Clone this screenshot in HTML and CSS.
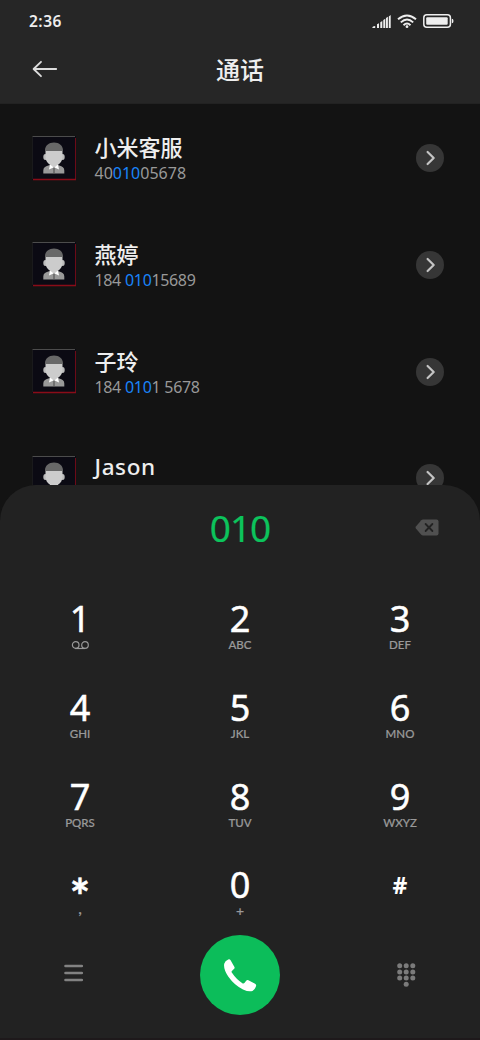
FILE: index.html
```html
<!DOCTYPE html>
<html lang="zh-CN">
<head>
<meta charset="utf-8">
<title>通话</title>
<link rel="stylesheet" href="styles.css">
</head>
<body>
<svg class="defs" width="0" height="0">
  <symbol id="avatar" viewBox="0 0 44 45">
    <path fill="#0b0a13" d="M0 0h44v44H0z"/>
    <path fill="#999" d="M11.300 37.500v-3c0-3 2-4.200 5-5l3-1h5l3 1c3 .8 5 2 5 5v3z"/>
    <path fill="#ccc" d="M18.500 24h7v6l-3.500 2-3.500-2z"/>
    <ellipse cx="13.300" cy="21" rx="2" ry="2.900" fill="#bbb"/>
    <ellipse cx="30.700" cy="21" rx="2" ry="2.900" fill="#bbb"/>
    <path fill="#ccc" d="M13.500 14h17v6.500c0 5.200-3.700 9.300-8.500 9.300s-8.500-4.100-8.500-9.300z"/>
    <path fill="#686868" d="M13 16v-1.500C13 9.500 16.800 6.500 22 6.500s9 3 9 8V16l-1-1H14z"/>
    <path fill="#fff" d="M18 28.500l4 3.300 4-3.300 1 5-5-2.200-5 2.200z"/>
    <path fill="#555" d="M21.400 31.500h1.200v6h-1.200z"/>
    <path fill="#4c4c4c" d="M0 0h43v1H0z"/>
    <path fill="#222" d="M0 0h.7v43H0z"/>
    <path fill="#6c0a18" d="M43 2h1v42h-1z"/>
    <path fill="#8a0c18" d="M1 42.700h43v1.600H1z"/>
  </symbol>
  <symbol id="chevron" viewBox="0 0 28 28">
    <path d="M11.600 8L17.700 14l-6.100 6" fill="none" stroke="#c4c4c4" stroke-width="2.200" stroke-linecap="round" stroke-linejoin="round"/>
  </symbol>
</svg>
<div class="phone">
  <header class="header">
    <div class="status">
      <span class="time">2:36</span>
      <div class="indicators">
        <svg width="19" height="13" viewBox="0 0 19 13" fill="#eee"><path d="M.3 13q0-2 2.900-2v2zM5 9.300l2-1.100V13H5zM8.300 7.300l2-1.400V13h-2zM11.300 5.100l2-1.400V13h-2zM14 3.100l1.900-1.300V13H14zM16.800 1.400L18.700 0v13h-1.900z"/></svg>
        <svg width="20" height="15" viewBox="0 0 20 15" fill="none" stroke="#eee" stroke-width="1.900"><path d="M1 5.300Q10-2.500 19 5.300M3.800 8.400Q10 2.800 16.200 8.400M6.500 11.200Q10 7.800 13.500 11.200"/><circle cx="10" cy="12.700" r="1.400" fill="#eee" stroke="none"/></svg>
        <svg width="31" height="14" viewBox="0 0 31 14"><rect x=".8" y=".8" width="26.600" height="12.400" rx="3" fill="none" stroke="#eee" stroke-width="1.500"/><rect x="3.200" y="3.200" width="21.500" height="7.600" rx="1" fill="#eee"/><path d="M28.800 4.800q1.700 0 1.700 2.200t-1.700 2.200z" fill="#eee"/></svg>
      </div>
    </div>
    <div class="titlebar">
      <svg class="back" width="26" height="18" viewBox="0 0 26 18" fill="none" stroke="#ddd" stroke-width="1.800" stroke-linecap="round" stroke-linejoin="round"><path d="M24.200 9H1.800M9 1.800L1.600 9 9 16.200"/></svg>
      <h1 class="title">通话</h1>
    </div>
  </header>
  <main class="contacts">
    <div class="contact">
      <svg class="avatar"><use href="#avatar"/></svg>
      <div class="info"><div class="name">小米客服</div><div class="number">40<b>010</b>05678</div></div>
      <svg class="more"><use href="#chevron"/></svg>
    </div>
    <div class="contact">
      <svg class="avatar"><use href="#avatar"/></svg>
      <div class="info"><div class="name">燕婷</div><div class="number spaced">184 <b>010</b>15689</div></div>
      <svg class="more"><use href="#chevron"/></svg>
    </div>
    <div class="contact">
      <svg class="avatar"><use href="#avatar"/></svg>
      <div class="info"><div class="name">子玲</div><div class="number spaced">184 <b>010</b>1 5678</div></div>
      <svg class="more"><use href="#chevron"/></svg>
    </div>
    <div class="contact">
      <svg class="avatar"><use href="#avatar"/></svg>
      <div class="info"><div class="name latin">Jason</div><div class="number"></div></div>
      <svg class="more"><use href="#chevron"/></svg>
    </div>
  </main>
  <section class="dialer">
    <div class="entry">
      <span></span>
      <output class="digits">010</output>
      <svg class="erase" width="24" height="17" viewBox="0 0 24 17"><path d="M8 .5h13.500a2 2 0 0 1 2 2v12a2 2 0 0 1-2 2H8q-1 0-1.700-.8L.9 9.500q-.8-1 0-2L6.300 1.300Q7 .5 8 .5z" fill="#505050"/><path d="M10.600 5l6.800 7M17.400 5l-6.800 7" stroke="#222" stroke-width="1.800" stroke-linecap="round"/></svg>
    </div>
    <div class="keypad">
      <div class="key"><span class="digit">1</span><span class="letters"><svg class="voicemail" width="18" height="9" viewBox="0 0 18 9" fill="none" stroke="#999" stroke-width="1.200"><circle cx="4.700" cy="4" r="3.300"/><circle cx="14" cy="4" r="3.300"/><path d="M4 7.500h10"/></svg></span></div>
      <div class="key"><span class="digit">2</span><span class="letters">ABC</span></div>
      <div class="key"><span class="digit">3</span><span class="letters">DEF</span></div>
      <div class="key"><span class="digit">4</span><span class="letters">GHI</span></div>
      <div class="key"><span class="digit">5</span><span class="letters">JKL</span></div>
      <div class="key"><span class="digit">6</span><span class="letters">MNO</span></div>
      <div class="key"><span class="digit">7</span><span class="letters">PQRS</span></div>
      <div class="key"><span class="digit">8</span><span class="letters">TUV</span></div>
      <div class="key"><span class="digit">9</span><span class="letters">WXYZ</span></div>
      <div class="key"><span class="digit star">*</span><span class="letters comma">,</span></div>
      <div class="key"><span class="digit">0</span><span class="letters plus">+</span></div>
      <div class="key"><span class="digit hash">#</span></div>
    </div>
    <div class="actions">
      <svg class="menu" width="20" height="18" viewBox="0 0 20 18" stroke="#828282" stroke-width="2.600" stroke-linecap="round"><path d="M1.500 2h16.300M1.500 9h16.300M1.500 16h16.300"/></svg>
      <div class="call"><svg width="34" height="34" viewBox="0 0 34 34"><path fill="#fff" d="M1.200 5.700Q2 2.700 5.200 1.400q1.600-.6 2.400.9l3.700 6.400q.8 1.300-.4 2.300l-2 1.900q-.7.700-.1 1.700 4.700 7.200 10.900 10.800 1 .5 1.700-.3l1.800-2.300q.9-1.200 2.200-.5l6.700 3.500q1.500.9.900 2.400-1.200 3.500-3.500 4.700-3.500 1.400-9.500-1.500Q11.500 27.300 5.400 18.700.2 11.200 1.200 5.700z"/></svg></div>
      <svg class="pad" width="20" height="24" viewBox="0 0 20 24" fill="#7b7b7b"><circle cx="3.700" cy="2.800" r="2.500"/><circle cx="10.200" cy="2.800" r="2.500"/><circle cx="16.800" cy="2.800" r="2.500"/><circle cx="3.700" cy="9" r="2.500"/><circle cx="10.200" cy="9" r="2.500"/><circle cx="16.800" cy="9" r="2.500"/><circle cx="3.700" cy="15.100" r="2.500"/><circle cx="10.200" cy="15.100" r="2.500"/><circle cx="16.800" cy="15.100" r="2.500"/><circle cx="10.200" cy="21.200" r="2.500"/></svg>
    </div>
  </section>
</div>
</body>
</html>
```
FILE: styles.css
```css
* { box-sizing: border-box; }
body { margin: 0; background: #131313; font-family: "Noto Sans", "Noto Sans CJK SC", sans-serif; }
svg { display: block; flex: none; }
.defs { position: absolute; }
.phone { width: 480px; height: 1040px; overflow: hidden; display: flex; flex-direction: column; background: #131313; }
.header { flex: none; height: 104px; background: #262626; display: flex; flex-direction: column; border-bottom: 1px solid #222; }
.status { height: 42px; padding: 0 26px 0 29px; display: flex; align-items: center; justify-content: space-between; }
.time { font: 600 15.500px/20px "Noto Sans", sans-serif; letter-spacing: .5px; color: #eee; }
.indicators { display: flex; align-items: center; gap: 6px; }
.titlebar { height: 54px; padding: 0 32px; display: grid; grid-template-columns: 1fr auto 1fr; align-items: center; }
.title { margin: 0; font: 500 24px/32px "Noto Sans CJK SC", sans-serif; color: #eee; }
.contacts { flex: none; height: 381px; overflow: hidden; padding-top: .9px; }
.contact { height: 106.67px; padding: 0 36px 0 32px; display: flex; align-items: center; }
.avatar { width: 44px; height: 45px; }
.info { flex: 1; padding-left: 18.500px; }
.name { font: 500 22px/28px "Noto Sans", "Noto Sans CJK SC", sans-serif; height: 29px; color: #eee; }
.latin { font-size: 22.500px; letter-spacing: .6px; }
.number { font-size: 16px; line-height: 22px; height: 21px; color: #999; }
.spaced { letter-spacing: -.35px; word-spacing: .3px; }
.number b { font-weight: 400; color: #1a84fa; }
.more { width: 28px; height: 28px; border-radius: 50%; background: #363636; }
.dialer { flex: 1; background: #222; border-radius: 36px 36px 0 0; border-bottom: 2px solid #1e191b; }
.entry { height: 84px; padding: 0 41px; display: grid; grid-template-columns: 1fr auto 1fr; align-items: center; }
.digits { font-size: 37px; line-height: 44px; letter-spacing: -1px; padding-top: 1px; color: #0cc35c; -webkit-text-stroke: .2px #0cc35c; }
.erase { justify-self: end; }
.keypad { display: grid; grid-template-columns: repeat(3, 1fr); grid-auto-rows: 88.800px; padding-top: 31px; }
.key { display: flex; flex-direction: column; align-items: center; }
.digit { height: 38px; font-size: 36px; line-height: 38px; font-weight: 400; color: #fff; -webkit-text-stroke: .5px #fff; }
.letters { height: 14px; font: 500 11.500px/14px Lato, "Noto Sans", sans-serif; color: #999; -webkit-text-stroke: .2px #999; }
.voicemail { margin-top: 3px; }
.star { font-family: Lato, sans-serif; font-size: 48px; line-height: 60px; font-weight: 700; }
.hash { font-size: 23px; line-height: 38px; font-weight: 700; -webkit-text-stroke: 0; }
.comma { font-size: 16px; line-height: 8px; }
.plus { font-size: 14px; line-height: 13px; }
.actions { height: 80px; margin-top: -20px; padding: 0 64px; display: grid; grid-template-columns: 1fr auto 1fr; align-items: center; }
.menu { margin-bottom: 4px; }
.call { width: 80px; height: 80px; border-radius: 50%; background: #0cbd5a; display: grid; place-items: center; }
.pad { justify-self: end; margin-bottom: 1px; }
```
